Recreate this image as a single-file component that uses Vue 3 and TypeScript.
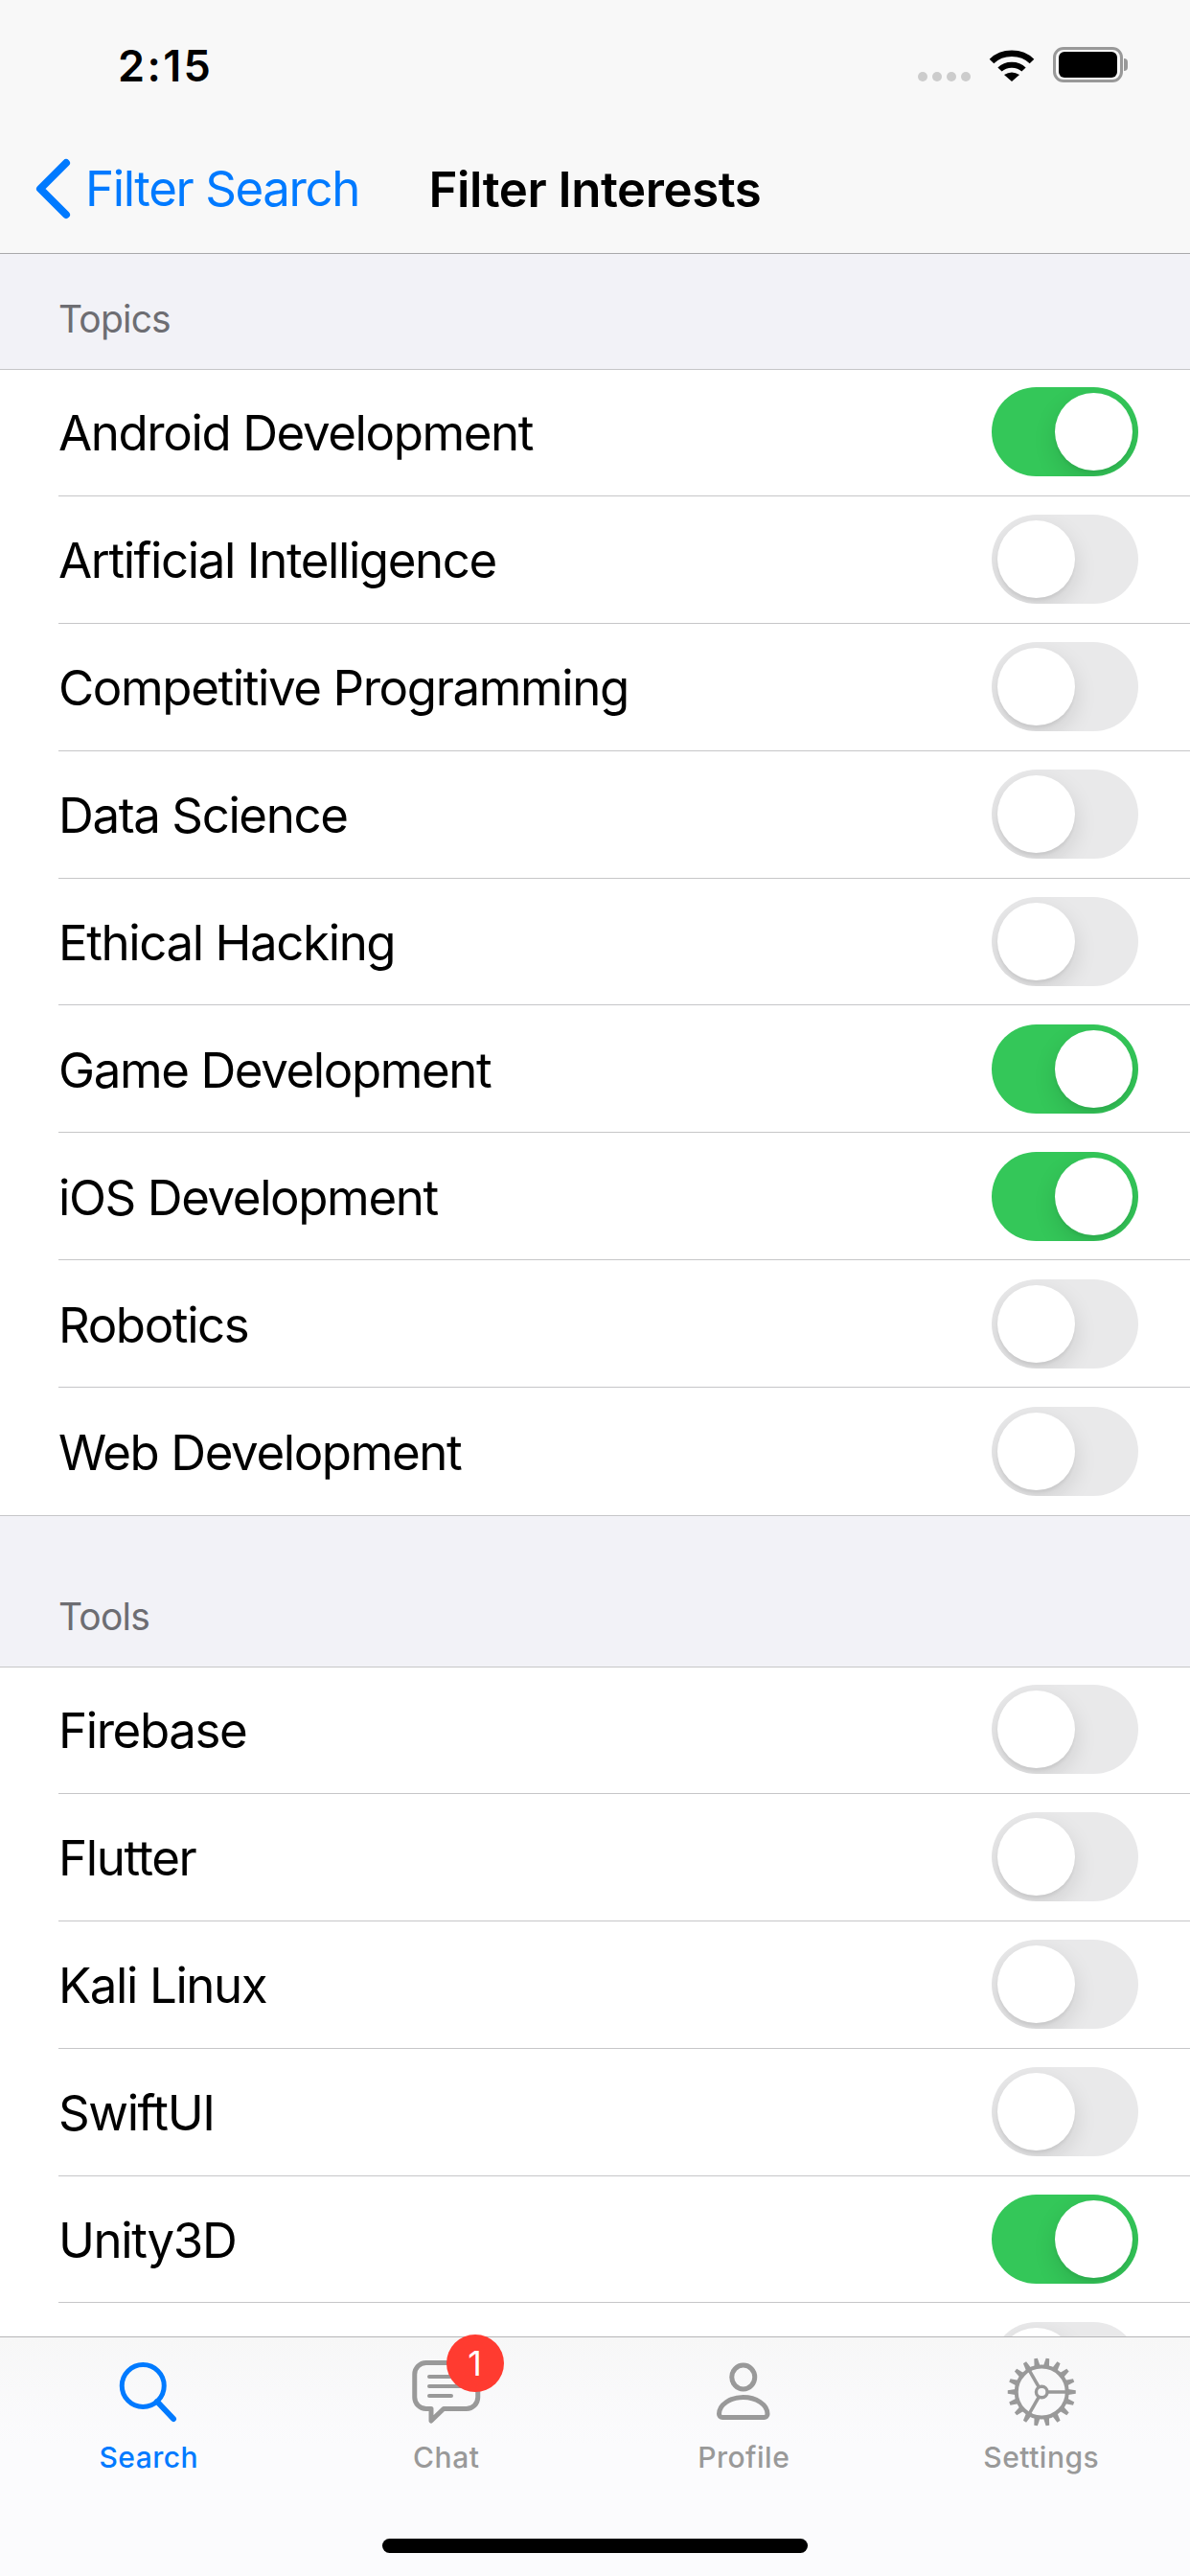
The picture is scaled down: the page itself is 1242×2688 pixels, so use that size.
<script setup lang="ts">
interface Item { name: string; on: boolean }
const sections: { title: string; items: Item[] }[] = [
  { title: 'Topics', items: [
    { name: 'Android Development', on: true },
    { name: 'Artificial Intelligence', on: false },
    { name: 'Competitive Programming', on: false },
    { name: 'Data Science', on: false },
    { name: 'Ethical Hacking', on: false },
    { name: 'Game Development', on: true },
    { name: 'iOS Development', on: true },
    { name: 'Robotics', on: false },
    { name: 'Web Development', on: false },
  ] },
  { title: 'Tools', items: [
    { name: 'Firebase', on: false },
    { name: 'Flutter', on: false },
    { name: 'Kali Linux', on: false },
    { name: 'SwiftUI', on: false },
    { name: 'Unity3D', on: true },
    { name: '', on: false },
  ] },
]
const teeth: number[] = Array.from({ length: 18 }, (_, i) => 10 + i * 20)
const spokes: number[] = [90, 210, 330]
</script>

<template>
  <div class="screen">
    <header class="nav">
      <div class="status">
        <span class="time">2:15</span>
        <div class="status-icons">
          <div class="dots"><i></i><i></i><i></i><i></i></div>
          <svg class="wifi" width="48" height="36" viewBox="0 0 48 36">
            <path d="M3 15 C14 4 34 4 45 15" fill="none" stroke="#000" stroke-width="6.5" />
            <path d="M11.5 23.5 C18 17 30 17 36.5 23.5" fill="none" stroke="#000" stroke-width="6" />
            <path d="M16 29 Q24 24 32 29 L24 36Z" fill="#000" />
          </svg>
          <div class="battery"><div class="cell"></div></div>
          <div class="nub"></div>
        </div>
      </div>
      <div class="bar">
        <div class="back">
          <svg width="38" height="64" viewBox="0 0 38 64">
            <path d="M33 5 L6 32 L33 59" fill="none" stroke="#007aff" stroke-width="8" stroke-linecap="round" stroke-linejoin="round" />
          </svg>
          <span class="back-label">Filter Search</span>
        </div>
        <span class="title">Filter Interests</span>
      </div>
    </header>

    <main class="content">
      <section v-for="section in sections" :key="section.title" class="section">
        <h2 class="section-title">{{ section.title }}</h2>
        <ul class="list">
          <li v-for="(item, i) in section.items" :key="i" class="row">
            <span class="row-label">{{ item.name }}</span>
            <span class="toggle" :class="{ on: item.on }"><span class="knob"></span></span>
          </li>
        </ul>
      </section>
    </main>

    <footer class="tabbar">
      <nav class="tabs">
        <div class="tab active">
          <svg class="icon" width="100" height="80" viewBox="0 0 100 80">
            <circle cx="44.25" cy="33.5" r="22" fill="none" stroke="#007aff" stroke-width="5" />
            <path d="M59 50 L76 68" stroke="#007aff" stroke-width="6" stroke-linecap="round" />
          </svg>
          <span class="tab-label">Search</span>
        </div>
        <div class="tab">
          <svg class="icon" width="100" height="80" viewBox="0 0 100 80">
            <path d="M28.75 9.5 H70.75 a12 12 0 0 1 12 12 V45.5 a12 12 0 0 1 -12 12 H47 L34 70 V57.5 H28.75 a12 12 0 0 1 -12 -12 V21.5 a12 12 0 0 1 12 -12Z" fill="none" stroke="#999" stroke-width="5" stroke-linejoin="round" />
            <path d="M32 24 H66 M32 34 H66 M32 44 H55" stroke="#999" stroke-width="4" stroke-linecap="round" />
          </svg>
          <span class="tab-label">Chat</span>
          <span class="badge">1</span>
        </div>
        <div class="tab">
          <svg class="icon" width="100" height="80" viewBox="0 0 100 80">
            <ellipse cx="49.75" cy="24.5" rx="12" ry="12.5" fill="none" stroke="#999" stroke-width="5" />
            <path d="M28 66.5 H71.5 a3.5 3.5 0 0 0 3.5 -3.5 C75 53 63 45.5 49.75 45.5 C36.5 45.5 24.5 53 24.5 63 a3.5 3.5 0 0 0 3.5 3.5Z" fill="none" stroke="#999" stroke-width="5" />
          </svg>
          <span class="tab-label">Profile</span>
        </div>
        <div class="tab">
          <svg class="icon" width="100" height="80" viewBox="0 0 100 80">
            <g transform="translate(50.25 40)">
              <path v-for="a in teeth" :key="a" d="M-3.2 -26 L-1.8 -35.5 H1.8 L3.2 -26Z" fill="#999" :transform="`rotate(${a})`" />
              <circle r="26.5" fill="none" stroke="#999" stroke-width="4" />
              <path v-for="a in spokes" :key="a" d="M0 -6 V-26" stroke="#999" stroke-width="3.5" :transform="`rotate(${a})`" />
              <circle r="5.8" fill="none" stroke="#999" stroke-width="3.4" />
            </g>
          </svg>
          <span class="tab-label">Settings</span>
        </div>
      </nav>
      <div class="home"></div>
    </footer>
  </div>
</template>

<style>
html, body { margin: 0; padding: 0; background: #fff; }
</style>

<style scoped>
.screen {
  width: 1242px;
  height: 2688px;
  display: flex;
  flex-direction: column;
  overflow: hidden;
  background: #f2f2f7;
  font-family: Inter, "Liberation Sans", sans-serif;
  color: #000;
  -webkit-font-smoothing: antialiased;
}
.nav {
  flex: none;
  height: 265px;
  box-sizing: border-box;
  background: #f8f8f8;
  border-bottom: 1px solid #a9a9ab;
}
.status {
  height: 132px;
  box-sizing: border-box;
  padding: 42px 65px 0 123px;
  display: flex;
  justify-content: space-between;
  align-items: flex-start;
}
.time {
  font-size: 45px;
  line-height: 54px;
  font-weight: 600;
  letter-spacing: 2.4px;
}
.status-icons {
  display: flex;
  align-items: flex-end;
  padding-top: 7px;
}
.dots {
  display: flex;
  gap: 5px;
  margin-right: 19px;
  padding-bottom: 1px;
}
.dots i {
  width: 10px;
  height: 10px;
  border-radius: 50%;
  background: #ccc;
}
.wifi { display: block; margin-right: 19px; margin-bottom: 1px; }
.battery {
  width: 73px;
  height: 37px;
  box-sizing: border-box;
  border: 3px solid #999;
  border-radius: 11px;
  padding: 2px 3px;
}
.cell {
  height: 100%;
  border-radius: 6px;
  background: #000;
}
.nub {
  width: 4px;
  height: 13px;
  margin: 0 0 12px 1px;
  border-radius: 0 4px 4px 0;
  background: #999;
}
.bar {
  position: relative;
  height: 132px;
  display: flex;
  align-items: center;
  justify-content: center;
}
.back {
  position: absolute;
  left: 36px;
  top: 33px;
  display: flex;
  align-items: center;
  gap: 15px;
}
.back svg { display: block; }
.back-label {
  font-size: 51px;
  line-height: 64px;
  color: #007aff;
  letter-spacing: -1.4px;
}
.title {
  font-size: 51px;
  line-height: 64px;
  font-weight: 600;
  letter-spacing: -0.45px;
}
.content {
  flex: 1;
  min-height: 0;
  overflow: hidden;
}
.section-title {
  margin: 0;
  box-sizing: border-box;
  height: 120px;
  display: flex;
  align-items: flex-end;
  padding: 0 61px 29px;
  font-size: 39px;
  line-height: 47px;
  font-weight: 400;
  color: #6d6d72;
  letter-spacing: -0.8px;
}
.section + .section .section-title { height: 157px; }
.list {
  list-style: none;
  margin: 0;
  padding: 0;
  background: #fff;
  border-top: 1px solid #c6c6c8;
  border-bottom: 1px solid #c6c6c8;
}
.row {
  box-sizing: border-box;
  height: 132.9px;
  margin-left: 61px;
  padding-right: 54px;
  display: flex;
  align-items: center;
  justify-content: space-between;
  border-bottom: 1px solid #c6c6c8;
}
.row:first-child { margin-top: -1px; }
.row:last-child { border-bottom: 0; }
.row-label {
  font-size: 51px;
  line-height: 62px;
  letter-spacing: -1.4px;
  padding-top: 3px;
}
.toggle {
  position: relative;
  width: 153px;
  height: 93px;
  border-radius: 47px;
  background: #e9e9ea;
  overflow: hidden;
  flex: none;
}
.toggle.on { background: #34c759; }
.knob {
  position: absolute;
  top: 6px;
  left: 6px;
  width: 81px;
  height: 81px;
  border-radius: 50%;
  background: #fff;
  box-shadow: 0 9px 24px rgba(0, 0, 0, 0.12), 0 3px 3px rgba(0, 0, 0, 0.05);
}
.toggle.on .knob { left: 66px; }
.tabbar {
  position: relative;
  flex: none;
  height: 250px;
  box-sizing: border-box;
  background: linear-gradient(#f7f7f7, #fbfbfd 45%);
  border-top: 1px solid #b5b5b7;
  display: flex;
  flex-direction: column;
  align-items: center;
}
.tabs {
  width: 100%;
  display: grid;
  grid-template-columns: repeat(4, 1fr);
  height: 210px;
}
.tab {
  position: relative;
  display: flex;
  flex-direction: column;
  align-items: center;
  padding-top: 17px;
  color: #999;
}
.tab.active { color: #007aff; }
.icon { display: block; }
.tab-label {
  margin-top: 10px;
  font-size: 30px;
  line-height: 36px;
  font-weight: 500;
  letter-spacing: 0.5px;
}
.badge {
  position: absolute;
  left: 155px;
  top: -3px;
  width: 60px;
  height: 60px;
  border-radius: 50%;
  background: #ff3b30;
  color: #fff;
  font-size: 36px;
  line-height: 60px;
  text-align: center;
}
.home {
  width: 444px;
  height: 15px;
  border-radius: 8px;
  background: #000;
}
</style>
